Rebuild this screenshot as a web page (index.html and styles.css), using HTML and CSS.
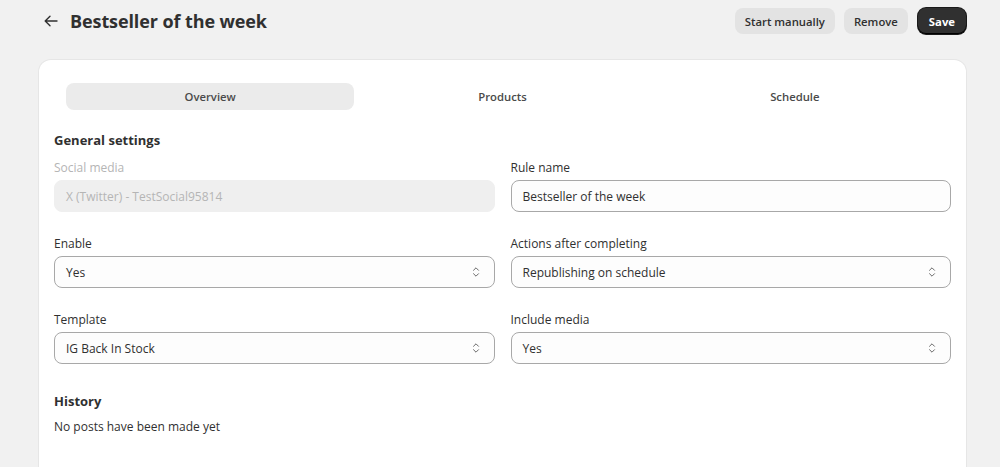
FILE: index.html
```html
<!DOCTYPE html>
<html lang="en">
<head>
<meta charset="utf-8">
<title>Bestseller of the week</title>
<link rel="stylesheet" href="styles.css">
</head>
<body>
<header class="topbar">
  <div class="title-wrap">
    <span class="back" aria-label="Back">
      <svg width="14" height="12" viewBox="0 0 14 12"><path d="M13 6H1.5M6 1.2L1.2 6 6 10.8" fill="none" stroke="#303030" stroke-width="1.4" stroke-linecap="round" stroke-linejoin="round"/></svg>
    </span>
    <h1 class="title">Bestseller of the week</h1>
  </div>
  <div class="actions">
    <button class="btn btn-secondary">Start manually</button>
    <button class="btn btn-secondary">Remove</button>
    <button class="btn btn-primary">Save</button>
  </div>
</header>

<main class="card">
  <nav class="tabs">
    <div class="tab tab-active">Overview</div>
    <div class="tab">Products</div>
    <div class="tab">Schedule</div>
  </nav>

  <h2 class="section-title">General settings</h2>
  <div class="grid">
    <div class="field">
      <label class="label label-disabled">Social media</label>
      <div class="input input-disabled">X (Twitter) - TestSocial95814</div>
    </div>
    <div class="field">
      <label class="label">Rule name</label>
      <div class="input">Bestseller of the week</div>
    </div>
    <div class="field">
      <label class="label">Enable</label>
      <div class="input select">Yes<span class="chev"><svg width="8" height="12" viewBox="0 0 8 12"><path d="M1.5 4.3L4 1.8 6.5 4.3M1.5 7.7L4 10.2 6.5 7.7" fill="none" stroke="#6b6b6b" stroke-width="1" stroke-linecap="round" stroke-linejoin="round"/></svg></span></div>
    </div>
    <div class="field">
      <label class="label">Actions after completing</label>
      <div class="input select">Republishing on schedule<span class="chev"><svg width="8" height="12" viewBox="0 0 8 12"><path d="M1.5 4.3L4 1.8 6.5 4.3M1.5 7.7L4 10.2 6.5 7.7" fill="none" stroke="#6b6b6b" stroke-width="1" stroke-linecap="round" stroke-linejoin="round"/></svg></span></div>
    </div>
    <div class="field">
      <label class="label">Template</label>
      <div class="input select">IG Back In Stock<span class="chev"><svg width="8" height="12" viewBox="0 0 8 12"><path d="M1.5 4.3L4 1.8 6.5 4.3M1.5 7.7L4 10.2 6.5 7.7" fill="none" stroke="#6b6b6b" stroke-width="1" stroke-linecap="round" stroke-linejoin="round"/></svg></span></div>
    </div>
    <div class="field">
      <label class="label">Include media</label>
      <div class="input select">Yes<span class="chev"><svg width="8" height="12" viewBox="0 0 8 12"><path d="M1.5 4.3L4 1.8 6.5 4.3M1.5 7.7L4 10.2 6.5 7.7" fill="none" stroke="#6b6b6b" stroke-width="1" stroke-linecap="round" stroke-linejoin="round"/></svg></span></div>
    </div>
  </div>

  <h2 class="section-title history">History</h2>
  <p class="empty">No posts have been made yet</p>
</main>
</body>
</html>
```
FILE: styles.css
```css
* { box-sizing: border-box; }
html, body { margin: 0; padding: 0; }
body {
  background: #f1f1f1;
  font-family: "Open Sans", "Noto Sans", sans-serif;
  color: #303030;
  font-size: 12px;
  overflow: hidden;
  height: 467px;
}
.topbar {
  display: flex;
  justify-content: space-between;
  align-items: center;
  height: 34px;
  padding: 8px 34px 0 44px;
}
.title-wrap { display: flex; align-items: center; gap: 12px; }
.back { display: flex; align-items: center; width: 14px; height: 12px; }
.title {
  margin: 0;
  font-size: 18px;
  font-weight: 700;
  color: #303030;
  letter-spacing: -0.1px;
}
.actions { display: flex; gap: 9px; }
.btn {
  font-family: inherit;
  font-size: 11.3px;
  font-weight: 600;
  border: 0;
  height: 26px;
  border-radius: 8px;
  padding: 0 10px;
  color: #303030;
}
.btn-secondary { background: #e3e3e3; }
.btn-primary {
  background: #303030;
  color: #fff;
  font-weight: 700;
  padding: 0 11px;
  margin-left: 1px;
  box-shadow: inset 0 -1px 0 #000, 0 0 0 1px #1a1a1a;
}
.card {
  margin: 26px 0 0 39px;
  width: 927px;
  min-height: 420px;
  background: #fff;
  border-radius: 12px;
  box-shadow: 0 0 0 1px #e6e6e6, 0 1px 0 #e0e0e0;
  padding: 23px 15px 0;
}
.tabs {
  display: grid;
  grid-template-columns: repeat(3, 1fr);
  gap: 4px;
  margin: 0 12px;
}
.tab {
  height: 27px;
  border-radius: 8px;
  display: flex;
  align-items: center;
  justify-content: center;
  font-size: 11.3px;
  font-weight: 600;
  color: #4a4a4a;
}
.tab-active { background: #ebebeb; }
.section-title {
  margin: 20px 0 8px;
  font-size: 13px;
  line-height: 20px;
  font-weight: 700;
  color: #303030;
}
.grid {
  display: grid;
  grid-template-columns: 1fr 1fr;
  column-gap: 16px;
  row-gap: 22px;
}
.field { display: flex; flex-direction: column; gap: 4px; }
.label { font-size: 12px; line-height: 18px; color: #303030; padding-top: 1px; margin-bottom: -1px; }
.label-disabled { color: #b5b5b5; }
.input {
  height: 32px;
  border: 1px solid #a8a8a8;
  border-radius: 8px;
  background: #fdfdfd;
  padding: 0 14px 0 11px;
  display: flex;
  align-items: center;
  justify-content: space-between;
  font-size: 12px;
  color: #303030;
}
.input-disabled {
  background: #efefef;
  border-color: #efefef;
  color: #b5b5b5;
}
.chev { display: flex; align-items: center; }
.history { margin-top: 27px; margin-bottom: 6px; }
.empty { margin: 0; font-size: 12px; line-height: 18px; color: #303030; padding-top: 1px; }
```
